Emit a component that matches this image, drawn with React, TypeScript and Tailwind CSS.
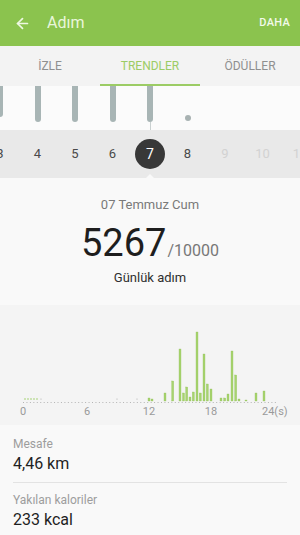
import { ArrowLeft } from 'lucide-react';

const days = [
  { n: '3', bar: 31, faded: false },
  { n: '4', bar: 36, faded: false },
  { n: '5', bar: 36, faded: false },
  { n: '6', bar: 36, faded: false },
  { n: '7', bar: 36, faded: false },
  { n: '8', bar: 0, faded: false },
  { n: '9', bar: 0, faded: true },
  { n: '10', bar: 0, faded: true },
  { n: '11', bar: 0, faded: true },
];

// [x, top] in chart coords, bars end on the baseline
const bars: [number, number][] = [
  [149, 93], [152, 94], [165, 88], [172.7, 76], [180, 44], [183.5, 88], [186.7, 82], [190, 92],
  [193.3, 87], [197, 27], [200.3, 88], [204, 49], [207.3, 79], [211, 84],
  [221, 93], [224.7, 93], [228, 89], [232, 46], [235.7, 70], [239, 94],
  [246, 95], [256, 88], [264, 86],
];

const BASE = 96;

function DayChart() {
  return (
    <svg width="300" height="120" viewBox="0 300 300 120" className="block">
      <line x1="23" y1={BASE + 301.5} x2="276" y2={BASE + 301.5} stroke="#b4b4b4" strokeWidth="1" strokeDasharray="1 2.45" />
      {[25, 28, 31, 34, 37].map((x) => (
        <circle key={x} cx={x} cy={BASE + 298} r="0.8" fill="#9ccc65" />
      ))}
      <circle cx="41" cy={BASE + 298} r="0.6" fill="#aaa" />
      <circle cx="117" cy={BASE + 298} r="0.6" fill="#aaa" />
      <circle cx="137" cy={BASE + 298} r="0.6" fill="#aaa" />
      {bars.map(([x, top], i) => (
        <rect key={i} x={x - 1} y={top + 300} width="2" height={BASE - top} fill="#a7d36f" stroke="#8fbf55" strokeWidth="0.3" />
      ))}
      {[
        ['0', 23, 'middle'],
        ['6', 87, 'middle'],
        ['12', 149, 'middle'],
        ['18', 211, 'middle'],
        ['24(s)', 262, 'start'],
      ].map(([t, x, a]) => (
        <text
          key={t as string}
          x={x as number}
          y={410}
          textAnchor={a as 'middle' | 'start'}
          fontSize="11"
          fill="#9a9a9a"
          fontFamily="Roboto, sans-serif"
        >
          {t}
        </text>
      ))}
    </svg>
  );
}

export default function App() {
  return (
    <div className="w-[300px] h-[535px] overflow-hidden bg-[#f9f9f9] font-['Roboto',sans-serif]">
      {/* header */}
      <div className="h-[46px] bg-[#8bc34e] flex items-center pl-[14px] pr-[10px]">
        <ArrowLeft className="w-[17px] h-[17px] text-[#eef8e2]" strokeWidth={2.4} />
        <span className="ml-[16px] text-[16px] text-[#e9f6da]">Adım</span>
        <span className="ml-auto text-[11px] font-medium tracking-wide text-[#f2faea]">DAHA</span>
      </div>

      {/* tabs */}
      <div className="h-[40px] bg-[#f3f3f3] flex text-[12px]">
        <div className="w-[100px] flex items-center justify-center text-[#8f8f8f]">İZLE</div>
        <div className="w-[100px] flex items-center justify-center text-[#9ccc65] border-b-[2px] border-[#9ccc65] pt-[2px]">TRENDLER</div>
        <div className="w-[100px] flex items-center justify-center text-[#8f8f8f]">ÖDÜLLER</div>
      </div>

      {/* weekly mini bars */}
      <div className="h-[44px] bg-[#fbfbfb] flex -ml-[18.75px]">
        {days.map((d, i) => (
          <div key={d.n} className="w-[37.5px] shrink-0 flex flex-col items-center">
            {d.bar > 0 && (
              <div className="w-[6px] bg-[#a8b5b5] rounded-b-full" style={{ height: d.bar }} />
            )}
            {i === 4 && <div className="w-px flex-1 bg-[#c9d0d0]" />}
            {i === 5 && <div className="mt-[29px] w-[6px] h-[6px] rounded-full bg-[#a8b2b2]" />}
          </div>
        ))}
      </div>

      {/* day selector */}
      <div className="h-[48px] bg-[#e9e9e9] flex items-center -ml-[18.75px] relative">
        {days.map((d, i) => (
          <div key={d.n} className="w-[37.5px] shrink-0 flex justify-center">
            {i === 4 ? (
              <div className="w-[30px] h-[30px] rounded-full bg-[#383838] text-white text-[14px] flex items-center justify-center">
                {d.n}
              </div>
            ) : (
              <span className={`text-[13px] ${d.faded ? 'text-[#d2d2d2]' : 'text-[#4a4a4a]'}`}>{d.n}</span>
            )}
          </div>
        ))}
        <div className="absolute bottom-0 left-[164.75px] w-0 h-0 border-l-[4px] border-r-[4px] border-b-[4px] border-l-transparent border-r-transparent border-b-[#f9f9f9]" />
      </div>

      {/* summary */}
      <div className="flex flex-col items-center pt-[17px] h-[127px]">
        <div className="text-[13px] text-[#7a7a7a]">07 Temmuz Cum</div>
        <div className="flex items-baseline mt-[9px] leading-none">
          <span className="text-[38px] text-[#1e1e1e]">5267</span>
          <span className="text-[16px] text-[#777] ml-[1px]">/10000</span>
        </div>
        <div className="mt-[6px] text-[13px] text-[#2f2f2f]">Günlük adım</div>
      </div>

      {/* hourly chart */}
      <div className="bg-[#f4f4f4]">
        <DayChart />
      </div>

      {/* stats */}
      <div className="px-[13px] pt-[10px]">
        <div className="pb-[7px] border-b border-[#e3e3e3]">
          <div className="text-[12px] text-[#9d9d9d]">Mesafe</div>
          <div className="text-[16px] text-[#1f1f1f] leading-[22px]">4,46 km</div>
        </div>
        <div className="pt-[8px] pb-[8px] border-b border-[#e3e3e3]">
          <div className="text-[12px] text-[#9d9d9d]">Yakılan kaloriler</div>
          <div className="text-[16px] text-[#1f1f1f] leading-[22px]">233 kcal</div>
        </div>
      </div>
    </div>
  );
}
